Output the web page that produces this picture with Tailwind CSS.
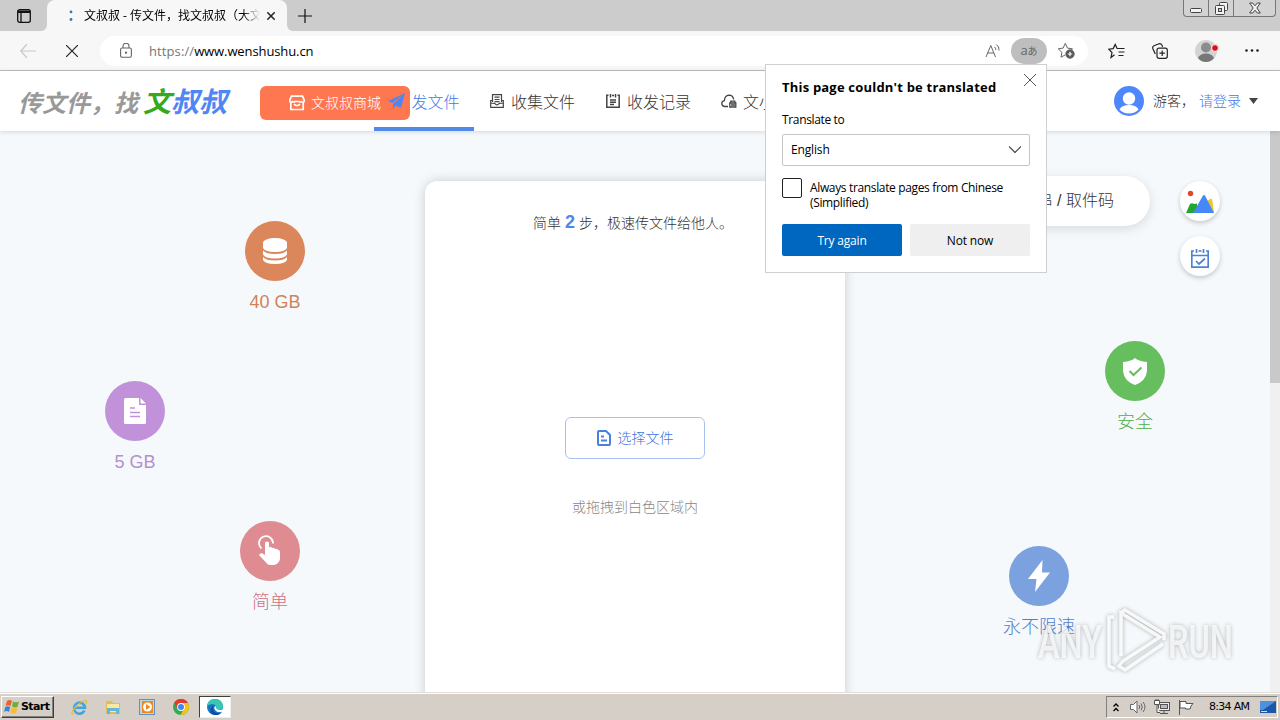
<!DOCTYPE html>
<html lang="zh-CN">
<head>
  <meta charset="UTF-8">
  <meta name="viewport" content="width=device-width, initial-scale=1.0">
  <title>文叔叔 - 传文件，找文叔叔</title>
  <script src="https://cdn.jsdelivr.net/npm/@tailwindcss/browser@4"></script>
</head>
<body class="relative flex flex-col w-[1280px] h-[720px] overflow-hidden bg-white font-['Open_Sans','Noto_Sans_CJK_SC',sans-serif]">

  <!-- Tab strip -->
  <div class="flex h-[31px] shrink-0 bg-[#f7f7f7]">
    <div class="flex items-center w-[47px] pl-[17px] bg-[#cccccc] rounded-br-md">
      <svg class="w-[14px] h-[14px]" viewBox="0 0 14 14" fill="none" stroke="#111" stroke-width="1.3"><rect x=".7" y=".7" width="12.6" height="12.6" rx="2"/><path d="M1 2.2h12M1 3.4h12M4 4v9"/></svg>
    </div>
    <div class="w-[240px] bg-[#cccccc]">
      <div class="flex items-center h-full bg-[#f7f7f7] rounded-t-lg pl-[22px] pr-[11px]">
        <svg class="w-1 h-3 shrink-0" viewBox="0 0 4 12" fill="#3c76b0"><circle cx="2" cy="1.9" r="1.4"/><circle cx="2" cy="9.5" r="1.4"/></svg>
        <span class="ml-[11px] w-[176px] overflow-hidden whitespace-nowrap text-[12px] leading-[18px] text-black mask-r-from-90%">文叔叔 - 传文件，找文叔叔（大文</span>
        <svg class="ml-[7px] mt-px w-2 h-2 shrink-0" viewBox="0 0 8 8" stroke="#222" stroke-width="1.5"><path d="M.3.3l7.4 7.4M7.7.3L.3 7.7"/></svg>
      </div>
    </div>
    <div class="flex items-center flex-1 pl-[11px] bg-[#cccccc] rounded-bl-md">
      <svg class="w-[14px] h-[14px]" viewBox="0 0 14 14" stroke="#111" stroke-width="1.2"><path d="M7 0v14M0 7h14"/></svg>
      <div class="flex self-start ml-auto mr-[4px] h-[17px] w-[93px] border border-t-0 border-[#777] rounded-b-[4px] bg-[#d2d2d2]">
        <div class="flex items-center justify-center w-[25px] border-r border-[#777]"><svg class="w-3 h-3 mt-1" viewBox="0 0 12 12" fill="#f2f2f2" stroke="#444"><rect x=".5" y="4.5" width="11" height="4" rx="1"/></svg></div>
        <div class="flex items-center justify-center w-[25px] border-r border-[#777]"><svg class="w-[13px] h-[13px]" viewBox="0 0 13 13" fill="#f2f2f2" stroke="#444"><rect x="4.500" y=".5" width="8" height="8" rx="1"/><rect x=".5" y="3.500" width="9" height="9" rx="1"/><rect x="3.500" y="6.500" width="3" height="3" fill="#ccc"/></svg></div>
        <div class="flex items-center justify-center flex-1"><svg class="w-3 h-3" viewBox="0 0 12 12" fill="#f2f2f2" stroke="#444"><path d="M.7 1h3L6 3.800 8.300 1h3L7.800 6l3.500 5h-3L6 8.200 3.700 11h-3L4.200 6z"/></svg></div>
      </div>
    </div>
  </div>

  <!-- Toolbar -->
  <div class="flex items-center h-[40px] shrink-0 bg-[#f7f7f7] border-b border-[#bdbdbd] pl-5">
    <svg class="w-4 h-[14px]" viewBox="0 0 16 14" fill="none" stroke="#c8c8c8" stroke-width="1.200"><path d="M7 0L.8 7 7 14M1 7h15"/></svg>
    <svg class="ml-[30px] w-3 h-3" viewBox="0 0 12 12" stroke="#222" stroke-width="1.200"><path d="M0 0l12 12M12 0L0 12"/></svg>
    <div class="flex items-center ml-[22px] w-[988px] h-[30px] bg-white rounded-full pl-5 pr-[13px]">
      <svg class="w-3 h-[15px]" viewBox="0 0 12 15" fill="none" stroke="#666" stroke-width="1.100"><rect x=".6" y="5" width="10.800" height="9.300" rx="1.500"/><path d="M3 5V3.200a3 3 0 0 1 6 0V5"/><circle cx="6" cy="9.700" r=".6" fill="#666"/></svg>
      <span class="ml-[17px] text-[13px] leading-[18px] text-black tracking-[-.1px]"><span class="text-[#767676] tracking-[.1px]">https://</span>www.wenshushu.cn</span>
      <svg class="ml-auto w-4 h-4" viewBox="0 0 16 16" fill="none" stroke="#666"><path d="M1 14L5.800 2.500 10.500 14M2.700 10h6.200M9.500 4q1.500 1 1.300 3M11.300 1.500Q14.500 3.500 14 7.500"/></svg>
      <div class="flex items-center justify-center ml-[10px] w-9 h-[26px] rounded-full bg-[#bebebe] text-[#666] text-[13px] leading-none">a<span class="text-[10px]">あ</span></div>
      <svg class="ml-[10px] w-[18px] h-[17px]" viewBox="0 0 18 17" fill="none" stroke="#666"><path d="M8 13L4 15.200 4.900 10.300 1.300 6.800l4.800-.7L8.300 1.300l2.200 4.800 5 .7-1.700 1.700"/><circle cx="13" cy="12" r="4.200" fill="#555"/><path d="M13 9.800v4.400M10.800 12h4.400" stroke="#fff" stroke-width="1.200"/></svg>
    </div>
    <svg class="ml-5 w-[17px] h-4" viewBox="0 0 17 16" fill="none" stroke="#222" stroke-width="1.200"><path d="M6.500 11.800L3 14.500l1-5L.7 6.200l4.500-.6L7.200 1.400l1.900 4.100h7.500M10.500 9h6M10.500 12.500h5"/></svg>
    <svg class="ml-[27px] w-[16px] h-4" viewBox="0 0 16 16" fill="none" stroke="#222" stroke-width="1.200"><rect x="5" y="5.200" width="10.300" height="10.100" rx="2"/><path d="M10.200 7.500v5.500M7.400 10.200h5.500M3.300 11L.8 5.500Q.2 3.600 2 2.700L7 .8Q9 .3 10 2.200l.7 1.500"/></svg>
    <svg class="ml-[27px] w-6 h-[22px]" viewBox="0 0 24 22"><circle cx="11" cy="11" r="11" fill="#d3d3d3"/><circle cx="11" cy="7.500" r="5" fill="#8c8c8c"/><path d="M3 18q2-4.500 8-4.500t8 4.500q-3 4-8 4t-8-4z" fill="#777"/><circle cx="20" cy="8" r="3.400" fill="#e00b1c" stroke="#f7f7f7"/></svg>
    <svg class="ml-[26px] w-[14px] h-[3px]" viewBox="0 0 14 3" fill="#222"><circle cx="1.500" cy="1.500" r="1.300"/><circle cx="7" cy="1.500" r="1.300"/><circle cx="12.500" cy="1.500" r="1.300"/></svg>
  </div>

  <!-- Site header -->
  <header class="relative z-10 flex items-center h-[60px] shrink-0 bg-white shadow-[0_1px_5px_rgba(0,0,0,.13)] pl-[18px] font-['Noto_Sans_CJK_SC',sans-serif] text-[16px] text-[#333]">
    <div class="flex items-baseline w-[242px] h-10 -mt-[3px] leading-10 whitespace-nowrap italic font-bold">
      <span class="text-[24px] text-[#999] w-[125px]">传文件，找</span>
      <span class="text-[28px] text-[#4e86f5]"><span class="text-[#35aa20]">文</span>叔叔</span>
    </div>
    <div class="flex items-center w-[150px] h-[34px] mt-1 rounded-md bg-[#ff7750] pl-[29px] pb-px text-[14px] font-light text-white">
      <svg class="w-4 h-4 mr-[6px]" viewBox="0 0 16 16" fill="none" stroke="#fff" stroke-width="1.700"><path d="M2.500 1.200h11L15.200 5v1.500q-1.200 1.500-2.600 0-1.300 1.500-2.500 0H5.900q-1.200 1.500-2.500 0Q2 8 .8 6.500V5zM1.800 7.500v7h12.400v-7M5 9.200q3 3 6 0"/></svg>
      文叔叔商城
    </div>
    <nav class="flex h-full items-center font-light">
      <a class="relative flex items-center justify-center w-[100px] h-full -ml-9 text-[#3f79ea]">
        <svg class="w-[17px] h-[17px] mr-[6px]" viewBox="0 0 17 17" fill="#4e86f0"><path d="M17 0L0 8l4.500 2zM17 0L5 11v5l2.500-3.500L13 15z"/></svg>发文件
        <span class="absolute left-0 bottom-0 w-full h-1 bg-[#5189e6]"></span>
      </a>
      <a class="flex items-center ml-4">
        <svg class="w-[14px] h-[14px] mr-[7px]" viewBox="0 0 14 14" fill="none" stroke="#444" stroke-width="1.200"><path d="M2.500 8V.7h9V8M4.500 3.200h5M4.500 5.500h5M4.500 7.700h5M2.500 6.500H.7v6.800h12.600V6.500h-1.800M.7 9l4 .3q2.300 3 4.600 0l4-.3"/></svg>收集文件
      </a>
      <a class="flex items-center ml-[31px]">
        <svg class="w-[14px] h-[14px] mr-[7px]" viewBox="0 0 14 14" fill="none" stroke="#444" stroke-width="1.500"><path d="M2.500 1.200H.8v12h12.400v-12h-1.700M4.500 0v3.500M9.500 0v3.500M6 1.500h2M4 6h6M4 8.300h6M4 10.600h4"/></svg>收发记录
      </a>
      <a class="flex items-center ml-[30px]">
        <svg class="w-4 h-[14px] mr-[6px]" viewBox="0 0 16 14" fill="none" stroke="#444" stroke-width="1.300"><path d="M7 12.500H3.500Q.7 12 .8 9.300.9 7 3.400 6.600 3.700 1.500 8 1.200q4 .1 4.700 4.300M8.800 9h6v4h-6zM9.800 9V7.200h4V9M10 11h4"/></svg>文小圈
      </a>
    </nav>
    <div class="flex items-center ml-auto mr-[22px] text-[14px] font-light">
      <svg class="w-[30px] h-[30px] mr-[9px]" viewBox="0 0 30 30"><circle cx="15" cy="15" r="15" fill="#4e86fb"/><circle cx="15" cy="12.500" r="6.200" fill="#fff"/><path d="M5.500 23.500q2-4.500 9.500-4.500t9.500 4.500Q21 27.500 15 27.500t-9.500-4z" fill="#fff"/></svg>
      <span class="w-[46px] -mt-0.5 whitespace-nowrap">游客，</span><span class="-mt-0.5 text-[#3f79ea]">请登录</span>
      <svg class="ml-[8px] w-[9px] h-[6px]" viewBox="0 0 9 6" fill="#444"><path d="M0 0h9L4.500 6z"/></svg>
    </div>
  </header>

  <!-- Page content -->
  <div class="flex h-[561px] shrink-0">
    <main class="relative flex justify-center w-[1270px] bg-[#f5f9fc] overflow-hidden font-light font-['Liberation_Sans','Noto_Sans_CJK_SC',sans-serif]">
      <section class="flex flex-col items-center w-[420px] h-[600px] mt-[50px] rounded-xl bg-white shadow-[0_0_12px_rgba(0,0,0,.18)]">
        <p class="mt-[29px] -ml-1 text-[14px] leading-6 text-[#333] whitespace-nowrap">简单 <span class="text-[18px] font-bold text-[#4e86f0]">2</span> 步，极速传文件给他人。</p>
        <button class="flex items-center justify-center mt-[182px] w-[140px] h-[42px] rounded-md border border-[#a9c1f2] text-[14px] text-[#3f75dc]">
          <svg class="w-[14px] h-4 mr-[7px]" viewBox="0 0 14 16" fill="none" stroke="#4a80df" stroke-width="2"><path d="M1 2q0-1 1-1h7l4 4v9q0 1-1 1H2q-1 0-1-1zM4 6.500h3M4 10.500h6"/></svg>选择文件
        </button>
        <p class="mt-9 text-[14px] leading-6 text-[#888]">或拖拽到白色区域内</p>
      </section>

      <!-- Floating feature bubbles -->
      <div class="absolute left-[215px] top-[90px] flex flex-col items-center w-[120px] text-[18px] leading-5 text-[#ce8358]">
        <div class="flex items-center justify-center w-15 h-15 rounded-full bg-[#dc875b] mb-[11px]">
          <svg class="w-[26px] h-[28px]" viewBox="0 0 26 28" fill="#fff"><ellipse cx="13" cy="6" rx="12" ry="5"/><path d="M1 6v5q2 4 12 4t12-4V6zM1 13.500v4q2 4 12 4t12-4v-4q-3 3.500-12 3.500T1 13.500zM1 20v3q2 4 12 4t12-4v-3q-3 3.500-12 3.500T1 20z"/></svg>
        </div>40 GB
      </div>
      <div class="absolute left-[75px] top-[250px] flex flex-col items-center w-[120px] text-[18px] leading-5 text-[#b391ce]">
        <div class="flex items-center justify-center w-15 h-15 rounded-full bg-[#c192da] mb-[11px]">
          <svg class="w-[22px] h-[26px]" viewBox="0 0 22 26"><path d="M1.500 0H15v7h7v17.500q0 1.500-1.500 1.500h-19Q0 26 0 24.500v-23Q0 0 1.500 0zM16.500 0L22 5.500h-5.500z" fill="#fff"/><path d="M6 10h5M6 14.500h10M6 18.500h10" stroke="#c192da" stroke-width="1.500"/></svg>
        </div>5 GB
      </div>
      <div class="absolute left-[210px] top-[390px] flex flex-col items-center w-[120px] text-[18px] leading-5 text-[#d0707e]">
        <div class="flex items-center justify-center w-15 h-15 rounded-full bg-[#df8b92] mb-[11px]">
          <svg class="w-[24px] h-[32px]" viewBox="0 0 24 32"><path d="M3.500 13.500A7 7 0 1 1 15 8.500" fill="none" stroke="#fff" stroke-width="1.800"/><path d="M7 7.500q2-2.200 4 0v5q1.500-1.500 3 .5 2-1 3 1 2-.8 3 1 2-.3 2 2v7q-1 5-6 6h-4q-3-.5-4-2.500L1 20q1-2.500 3.500-1.500L7 20z" fill="#fff"/></svg>
        </div>简单
      </div>
      <div class="absolute left-[1075px] top-[210px] flex flex-col items-center w-[120px] text-[18px] leading-5 text-[#50ad4c]">
        <div class="flex items-center justify-center w-15 h-15 rounded-full bg-[#66be5f] mb-[11px]">
          <svg class="w-6 h-[27px]" viewBox="0 0 24 27"><path d="M12 0q3 3 12 4v9q-1 10-12 14Q1 23 0 13V4q9-1 12-4z" fill="#fff"/><path d="M6.500 13l4 4 8-7.500" fill="none" stroke="#66be5f" stroke-width="2"/></svg>
        </div>安全
      </div>
      <div class="absolute left-[979px] top-[415px] flex flex-col items-center w-[120px] text-[18px] leading-5 text-[#5380cd]">
        <div class="flex items-center justify-center w-15 h-15 rounded-full bg-[#7ba2df] mb-[11px]">
          <svg class="w-[22px] h-8" viewBox="0 0 22 32" fill="#fff"><path d="M14.500 0L0 19h8.500L7 32 22 12.500h-8z"/></svg>
        </div>永不限速
      </div>

      <!-- Pick-up code field and side buttons -->
      <div class="absolute left-[930px] top-[45px] flex items-center justify-end w-[220px] h-[50px] pr-9 rounded-full bg-white shadow-[0_3px_12px_rgba(0,0,0,.12)] text-[16px] text-[#333]">链接串 / 取件码</div>
      <div class="absolute left-[1180px] top-[50px] flex flex-col gap-[15px]">
        <div class="flex items-center justify-center w-10 h-10 rounded-full bg-white shadow-[0_2px_5px_rgba(0,0,0,.2)]">
          <svg class="w-7 h-[23px]" viewBox="0 0 28 23"><circle cx="4.500" cy="3.500" r="2.700" fill="#d84b2d"/><path d="M21 11l4-2.500q1 0 1.500 3L28 23h-8z" fill="#ebc52e"/><path d="M0 23l4-9q2-1.500 4 0l3-.5V23z" fill="#22a62d"/><path d="M7 23l4-7 6-10.500q1-1 2 0L28 23z" fill="#4687f9"/></svg>
        </div>
        <div class="flex items-center justify-center w-10 h-10 rounded-full bg-white shadow-[0_2px_5px_rgba(0,0,0,.2)]">
          <svg class="w-[18px] h-[19px] mt-[4px]" viewBox="0 0 18 19" fill="none" stroke="#4c82d6" stroke-width="1.700"><path d="M3 2H.8v16.200h16.400V2H15M5.500 0v4M12.500 0v4M7.500 2h3M1 6.500h16M5 12l3 3 6-5.500"/></svg>
        </div>
      </div>
    </main>
    <div class="w-[10px] bg-[#f0f0f0]"><div class="h-[252px] bg-[#c9c9c9]"></div></div>
  </div>

  <!-- Taskbar -->
  <footer class="flex items-center h-[28px] shrink-0 bg-[#d6cfc8] border-t border-[#e0ddd8] shadow-[inset_0_1px_0_#fff] pt-px pl-px pr-0.5 font-['DejaVu_Sans',sans-serif] text-[11px] text-black">
    <div class="flex items-center w-[53px] h-[22px] border border-t-white border-l-white border-b-[#404040] border-r-[#404040] shadow-[inset_-1px_-1px_0_#808080] pl-0.5 text-[11px] font-bold tracking-[-.6px]">
      <svg class="w-4 h-4 mr-px shrink-0" viewBox="0 0 16 16"><path d="M3 2q3-2 5 0L6.500 7q-2.500-1.500-5 0z" fill="#e9642c"/><path d="M9 2.500q3 1.500 6 0L13.500 8q-3 1-5.500-.5z" fill="#72ad3b"/><path d="M1.200 8q2.500-1.500 5 0L5 13q-2.500-2-5 0z" fill="#3d83cf"/><path d="M7.500 8.500q3 1.500 5.800.2L12 14q-3 1-5.500-.5z" fill="#f5bd32"/></svg>Start
    </div>
    <svg class="ml-[17px] w-[17px] h-[17px]" viewBox="0 0 17 17" fill="none"><path d="M13.500 11.500A5.500 5.500 0 1 1 14 8.800H4.500" stroke="#42a5df" stroke-width="2.600"/><path d="M2 15.500Q-1 14 4.500 8T15 1.500q1.500 1-.5 4" stroke="#e5bd3c" stroke-width="1.200"/></svg>
    <svg class="ml-[17px] w-4 h-4" viewBox="0 0 16 16"><path d="M1 2h6l1 2h7v11H1z" fill="#e2bc56"/><path d="M2 5h12v8H2z" fill="#f8e8a2"/><path d="M2 9h12v6h-3v-3H5v3H2z" fill="#63b7d8"/></svg>
    <svg class="ml-[18px] w-4 h-4" viewBox="0 0 16 16"><rect x=".5" y=".5" width="15" height="15" fill="#b9d6ef" stroke="#5b93c6"/><rect x="3" y="2" width="11" height="12" fill="#f28818"/><circle cx="8.500" cy="8" r="4.500" fill="#fff"/><path d="M7 5l4.500 3L7 11z" fill="#f28818"/></svg>
    <svg class="ml-[18px] w-4 h-4" viewBox="0 0 16 16"><circle cx="8" cy="8" r="8" fill="#35a852"/><path d="M1 4a8 8 0 0 1 14 0H8L5 10z" fill="#e33b2e"/><path d="M8 4h7q3 7-3 11-2 1-4.500 1L11 10z" fill="#fbc116"/><circle cx="8" cy="8" r="3.900" fill="#fff"/><circle cx="8" cy="8" r="3" fill="#4285f4"/></svg>
    <div class="flex items-center justify-center ml-[10px] w-8 h-[22px] bg-white border border-t-[#404040] border-l-[#404040] border-b-[#eee] border-r-[#eee]">
      <svg class="w-4 h-4" viewBox="0 0 16 16"><circle cx="8" cy="8" r="8" fill="#1677c9"/><path d="M0 7Q1 0 8 0t8 7q0 4-5 4-2 0-2-1 1-1 0-3Q6 3 0 7z" fill="#38c7b0"/><path d="M6 9q0 5 5 5 2 0 4-1-3 4-8 3-5-2-3-7 1-2 3-2z" fill="#124f9e"/><path d="M9 8q0 3 4 3 2 0 3-1l-1 2.500q-4 2-6.500-1T8.500 7z" fill="#fff"/></svg>
    </div>
    <div class="flex items-center ml-auto w-[172px] h-[22px] border border-t-[#808080] border-l-[#808080] border-b-white border-r-white pl-[6px]">
      <svg class="w-[6px] h-[9px]" viewBox="0 0 6 9" fill="none" stroke="#000" stroke-width="1.300"><path d="M.5 3.500L3 1l2.500 2.500M.5 8L3 5.500 5.500 8"/></svg>
      <svg class="ml-[11px] w-4 h-[14px]" viewBox="0 0 16 14" fill="#fff" stroke="#666"><path d="M.5 4.500h3L7 1v12L3.500 9.500h-3z"/><path d="M9 5q1.500 2 0 4M11 3.500q2.500 3.500 0 7M13 2q4 5 0 10" fill="none"/></svg>
      <svg class="ml-2 w-4 h-4" viewBox="0 0 16 16" fill="#eee" stroke="#555"><rect x="4.500" y="3.500" width="11" height="8"/><rect x="6.500" y="5.500" width="7" height="4" fill="#bbb"/><path d="M6 14.500h8M10 12v2"/><path d="M.5 1.500h5v4h-5zM3 6v7.500h3" fill="#fff"/><path d="M2 0v2M4 0v2"/></svg>
      <svg class="ml-2 w-4 h-[15px]" viewBox="0 0 16 15" fill="#fff" stroke="#555"><path d="M1.500 0v15M2 1.500h6v2h7l-2 2.500-1 3H7.500V8H2z"/></svg>
      <span class="ml-[15px] w-[43px] whitespace-nowrap text-[11px] tracking-[-.7px]">8:34 AM</span>
      <svg class="ml-[8px] w-4 h-[13px]" viewBox="0 0 16 13"><rect width="16" height="12" fill="#1b59a8"/><path d="M0 0h16L3 9H0z" fill="#4f91da"/><path d="M1 10.500h6" stroke="#cde"/></svg>
    </div>
  </footer>

  <!-- Watermark over the page -->
  <svg class="absolute z-20 left-[1030px] top-[605px] w-[210px] h-[75px] drop-shadow-[0_0_2px_rgba(0,0,0,.35)]" viewBox="0 0 210 75" fill="none">
    <g font-family="Roboto" font-size="46" font-weight="500" fill="#fff" fill-opacity=".75">
      <text x="8" y="53" textLength="64" lengthAdjust="spacingAndGlyphs">ANY</text>
      <text x="138" y="53" textLength="65" lengthAdjust="spacingAndGlyphs">RUN</text>
    </g>
    <path d="M91 51V8l39 24-37 24-4 5 6 4 38-26M84 12h-5v49l6 3M91 8l4-3 39 24v6" stroke="#fff" stroke-opacity=".85" stroke-width="3.500"/>
  </svg>

  <!-- Translate popup -->
  <div class="absolute z-30 left-[765px] top-[64px] w-[282px] h-[209px] bg-white border border-[#cfcfcf] px-4 pt-[13px] text-[12px] leading-[15px] tracking-[-.35px] text-black">
    <div class="flex justify-between">
      <h2 class="text-[13px] leading-[18px] font-bold tracking-[.2px] whitespace-nowrap">This page couldn't be translated</h2>
      <svg class="-mt-[4px] -mr-[6px] w-3 h-3" viewBox="0 0 12 12" stroke="#555"><path d="M0 0l12 12M12 0L0 12"/></svg>
    </div>
    <p class="mt-4">Translate to</p>
    <div class="flex items-center justify-between mt-[7px] h-8 border border-[#c4c4c4] rounded-[2px] px-2 pb-px"><span class="tracking-[-.15px]">English</span>
      <svg class="w-3 h-[7px]" viewBox="0 0 12 7" fill="none" stroke="#444" stroke-width="1.200"><path d="M0 .5l6 6 6-6"/></svg>
    </div>
    <div class="flex mt-3">
      <span class="w-5 h-5 shrink-0 border border-[#222] rounded-[2px]"></span>
      <span class="ml-2 mt-[2px] whitespace-nowrap">Always translate pages from Chinese<br>(Simplified)</span>
    </div>
    <div class="flex gap-2 mt-[14px]">
      <button class="w-[120px] h-8 rounded-[2px] bg-[#0067c0] tracking-[-.2px] text-white">Try again</button>
      <button class="w-[120px] h-8 rounded-[2px] bg-[#efefef] tracking-[-.15px]">Not now</button>
    </div>
  </div>
</body>
</html>
